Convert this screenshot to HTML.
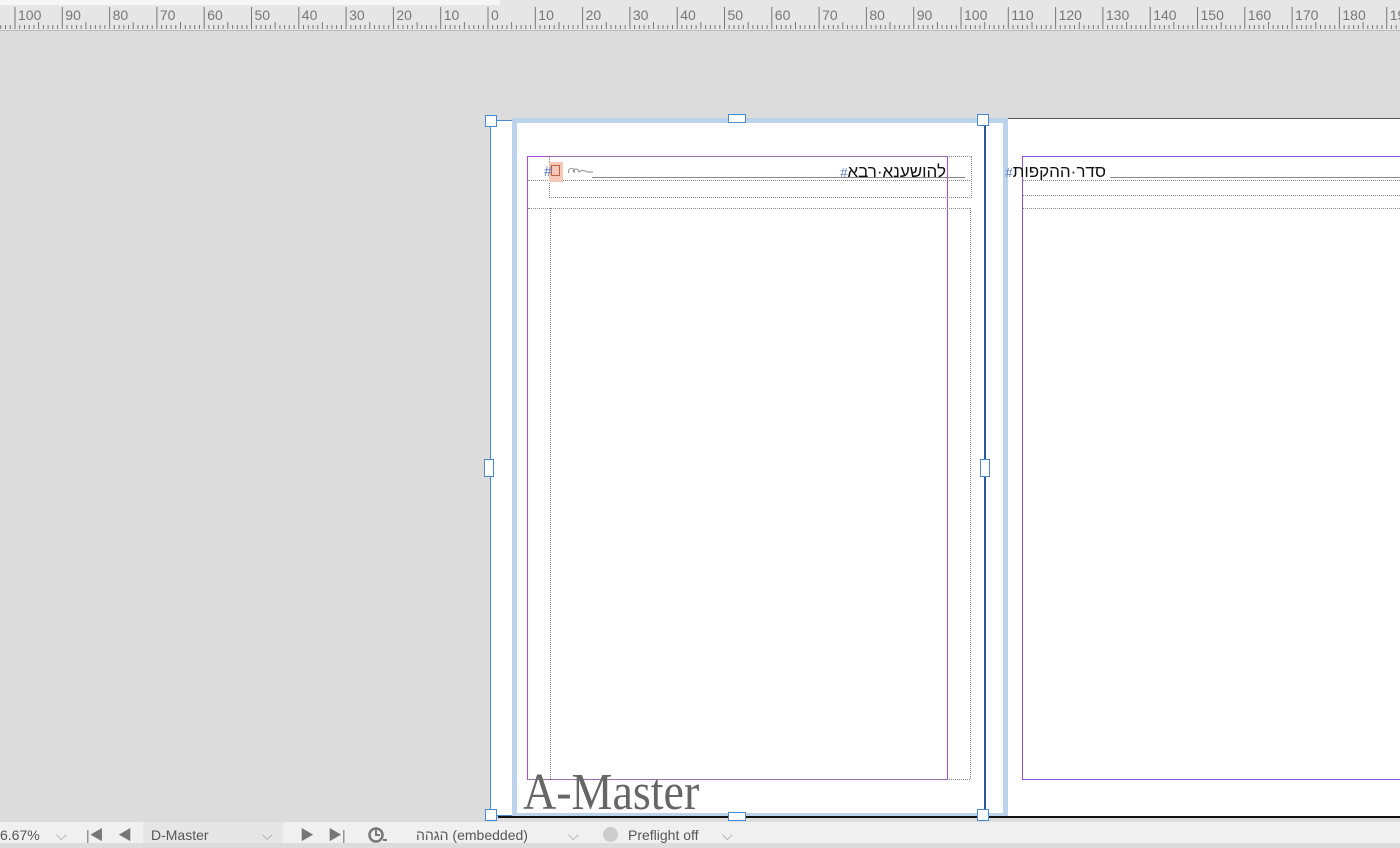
<!DOCTYPE html>
<html><head><meta charset="utf-8"><style>
body{margin:0;width:1400px;height:843px;overflow:hidden;background:#dcdcdc;position:relative;font-family:"Liberation Sans","Noto Sans CJK SC",sans-serif}
.a{position:absolute}
.h{position:absolute;width:10px;height:9px;background:#fff;border:1px solid #4a8ad4;box-sizing:border-box}
.dot{position:absolute;border-color:#888;border-style:dotted;border-width:0}
</style></head><body>
<div class="a" style="left:0;top:0;width:1400px;height:30px;background:#e6e6e6;border-bottom:1px solid #bbb"></div>
<div class="a" style="left:0;top:0;width:500px;height:5px;background:#f6f6f6"></div>
<svg class="a" style="left:0;top:0" width="1400" height="30" id="r"></svg>
<script>
var s='';for(var v=-110;v<=200;v++){var x=488+v*4.73;if(x<0||x>1400)continue;var h=v%10==0?22:(v%5==0?7:4);s+='<line x1="'+x.toFixed(1)+'" x2="'+x.toFixed(1)+'" y1="'+(29-h)+'" y2="29" stroke="#777" stroke-width="1"/>';if(v%10==0)s+='<text x="'+(x+3).toFixed(1)+'" y="20" font-size="14" fill="#777" font-family="Liberation Sans">'+Math.abs(v)+'</text>';}document.getElementById('r').innerHTML=s;
</script>
<div class="a" style="left:490px;top:120px;width:495px;height:696px;background:#fff;border:1px solid #4a8ad4;box-sizing:border-box"></div>
<div class="a" style="left:512px;top:118px;width:496px;height:700px;background:#bcd3ec"></div>
<div class="a" style="left:517px;top:123px;width:486px;height:690px;background:#fff"></div>
<div class="a" style="left:984px;top:122px;width:2px;height:693px;background:#2b5797"></div>
<div class="a" style="left:1008px;top:118px;width:392px;height:699px;background:#fff;border-top:1px solid #555"></div>
<div class="a" style="left:498px;top:816px;width:902px;height:2px;background:#111"></div>
<div class="a" style="left:527px;top:156px;width:421px;height:624px;border:1px solid #b04ad8;box-sizing:border-box"></div>
<div class="a" style="left:1022px;top:156px;width:400px;height:624px;border:1px solid #9050e0;box-sizing:border-box"></div>
<div class="dot" style="left:549px;top:156px;width:421px;height:40px;border-width:1px"></div>
<div class="dot" style="left:528px;top:180px;width:442px;border-top-width:1px"></div>
<div class="dot" style="left:528px;top:208px;width:442px;border-top-width:1px"></div>
<div class="dot" style="left:550px;top:208px;height:571px;border-left-width:1px"></div>
<div class="dot" style="left:970px;top:208px;height:571px;border-left-width:1px"></div>
<div class="dot" style="left:528px;top:779px;width:442px;border-top-width:1px"></div>
<div class="dot" style="left:1023px;top:180px;width:377px;border-top-width:1px"></div>
<div class="dot" style="left:1023px;top:195px;width:377px;border-top-width:1px"></div>
<div class="dot" style="left:1023px;top:208px;width:377px;border-top-width:1px"></div>
<div class="a" style="left:592px;top:177px;width:373px;height:1px;background:#888"></div>
<div class="a" style="left:1110px;top:177px;width:290px;height:1px;background:#888"></div>
<div class="a" style="left:549px;top:162px;width:14px;height:20px;background:#f6c8b8"></div>
<div class="a" style="left:551px;top:165px;width:9px;height:11px;border:1px solid #c06040;box-sizing:border-box"></div>
<div class="a" style="left:544px;top:163px;font-size:14px;color:#5577bb">#</div>
<svg class="a" style="left:567px;top:167px" width="30" height="10"><path d="M2 6a3 3 0 1 1 5 0M6 5a3 3 0 1 1 6 0q4 -3 8 0h6" fill="none" stroke="#888" stroke-width="1"/></svg>
<div class="a" dir="rtl" style="right:454px;top:162px;font-size:17px;color:#111;font-family:'Liberation Sans','DejaVu Sans',sans-serif">להושענא·רבא<span style="color:#5577bb;font-size:13px">#</span></div>
<div class="a" dir="rtl" style="right:294px;top:162px;font-size:17px;color:#111;font-family:'Liberation Sans','DejaVu Sans',sans-serif">סדר·ההקפות<span style="color:#5577bb;font-size:13px">#</span></div>
<div class="a" style="left:523px;top:764px;font-size:46px;color:#666;font-family:'Liberation Serif',serif;line-height:50px;transform:scaleY(1.12);transform-origin:0 0">A-Master</div>
<div class="h" style="left:485px;top:115px;width:12px;height:12px"></div>
<div class="h" style="left:728px;top:114px;width:18px"></div>
<div class="h" style="left:977px;top:114px;width:12px;height:12px"></div>
<div class="h" style="left:484px;top:459px;height:18px"></div>
<div class="h" style="left:980px;top:459px;height:18px"></div>
<div class="h" style="left:485px;top:809px;width:12px;height:12px"></div>
<div class="h" style="left:728px;top:812px;width:18px"></div>
<div class="h" style="left:977px;top:809px;width:12px;height:12px"></div>
<div class="a" style="left:0;top:822px;width:1400px;height:21px;background:#f0f0f0;font-size:14px;color:#555;line-height:26px">
<span class="a" style="left:0">6.67%</span><span class="a" style="left:56px;color:#999">⌵</span>
<span class="a" style="left:86px;color:#777">|◀</span><span class="a" style="left:118px;color:#777">◀</span>
<div class="a" style="left:143px;top:0;width:140px;height:21px;background:#e6e6e6"></div>
<span class="a" style="left:151px">D-Master</span><span class="a" style="left:262px;color:#999">⌵</span>
<span class="a" style="left:300px;color:#777">▶</span><span class="a" style="left:328px;color:#777">▶|</span>
<svg class="a" style="left:368px;top:4px" width="22" height="17"><circle cx="8" cy="9" r="6.5" fill="none" stroke="#777" stroke-width="2.5"/><path d="M8 4v5h4" stroke="#777" stroke-width="2" fill="none"/><path d="M15 14h4" stroke="#777" stroke-width="2"/></svg>
<span class="a" style="left:416px">הגהה (embedded)</span><span class="a" style="left:568px;color:#999">⌵</span>
<div class="a" style="left:603px;top:5px;width:15px;height:15px;border-radius:50%;background:#ccc"></div>
<span class="a" style="left:628px">Preflight off</span><span class="a" style="left:722px;color:#999">⌵</span>
</div>
</body></html>
